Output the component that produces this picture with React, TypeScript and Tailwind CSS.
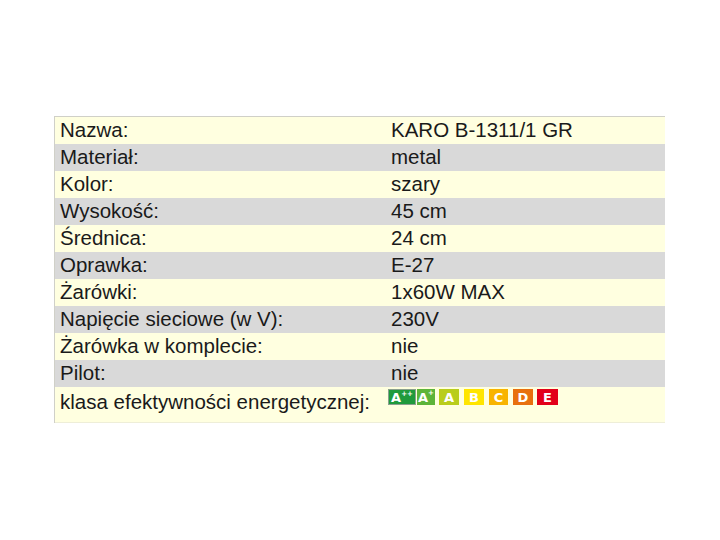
const rows: [string, string][] = [
  ["Nazwa:", "KARO B-1311/1 GR"],
  ["Materiał:", "metal"],
  ["Kolor:", "szary"],
  ["Wysokość:", "45 cm"],
  ["Średnica:", "24 cm"],
  ["Oprawka:", "E-27"],
  ["Żarówki:", "1x60W MAX"],
  ["Napięcie sieciowe (w V):", "230V"],
  ["Żarówka w komplecie:", "nie"],
  ["Pilot:", "nie"],
];

const badges = [
  { label: "A", sup: "++", cls: "bg-[#1f9a3c] w-[28px] border border-[#8aa08f]" },
  { label: "A", sup: "+", cls: "bg-[#5db43a] w-[18px] ml-[1px]" },
  { label: "A", sup: "", cls: "bg-[#b9cd1c] w-[20px] ml-[4px]" },
  { label: "B", sup: "", cls: "bg-[#ffe500] w-[20px] ml-[5px]" },
  { label: "C", sup: "", cls: "bg-[#f8b400] w-[19px] ml-[5px]" },
  { label: "D", sup: "", cls: "bg-[#e8700e] w-[20px] ml-[5px]" },
  { label: "E", sup: "", cls: "bg-[#e2001a] w-[21px] ml-[4px]" },
];

export default function App() {
  return (
    <div className="w-[720px] h-[540px] bg-white pt-[116px] pl-[54px] font-['Liberation_Sans',Arial,sans-serif] text-[#1a1a1a]">
      <div className="w-[611px] border-t border-l border-[#d0d0c8]">
        {rows.map(([label, value], i) => (
          <div
            key={label}
            className={`flex items-center h-[27px] text-[20.5px] leading-none ${
              i % 2 === 0 ? "bg-[#ffffe0]" : "bg-[#d9d9d9]"
            }`}
          >
            <span className="w-[336px] pl-[5px]">{label}</span>
            <span>{value}</span>
          </div>
        ))}
        {/* energy class row */}
        <div className="flex items-start h-[36px] bg-[#ffffe0] border-b border-[#eeeed8] text-[20.5px] leading-none">
          <span className="w-[333px] pl-[5px] pt-[5px]">klasa efektywności energetycznej:</span>
          <div className="flex items-center pt-[2px]">
            {badges.map((b, i) => (
              <div
                key={i}
                className={`h-[16px] flex items-center justify-center text-white font-bold text-[13px] font-['DejaVu_Sans',sans-serif] ${b.cls}`}
              >
                {b.label}
                {b.sup && <span className="text-[7px] self-start mt-[1px]">{b.sup}</span>}
              </div>
            ))}
          </div>
        </div>
      </div>
    </div>
  );
}
